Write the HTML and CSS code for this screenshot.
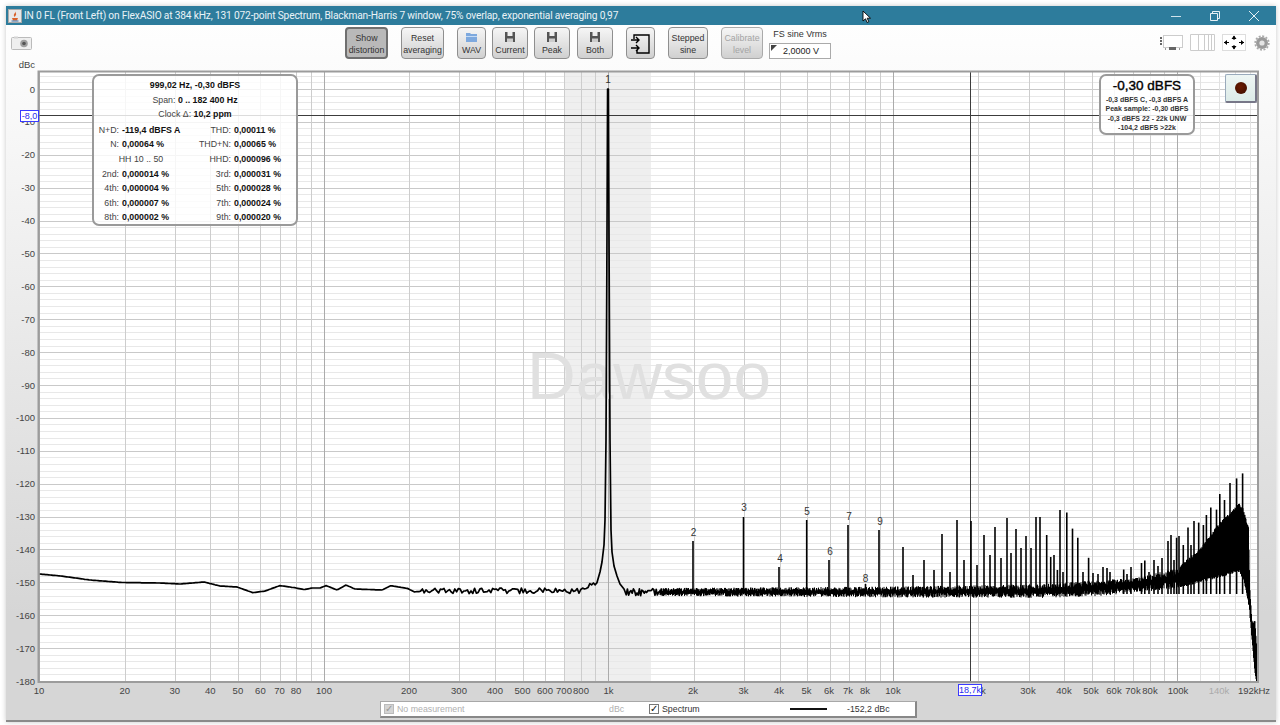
FILE: index.html
```html
<!DOCTYPE html>
<html lang="en">
<head>
  <meta charset="UTF-8">
  <title>REW RTA</title>
  <link rel="stylesheet" href="styles.css">
</head>
<body>
  <div class="window">
    <div class="titlebar">
      <svg class="app-icon" width="14" height="14" viewBox="0 0 14 14">
        <rect x="0.5" y="0.5" width="13" height="13" fill="#e8e8e8" stroke="#aaa"/>
        <path d="M7 2c1 2-2 3-1 5 .4.8 1 1 1 1-.3-1 2-2 .8-4M4 9h6l-1 2.5H5z" fill="#d9622b"/>
        <path d="M3.500 12h7" stroke="#3b6ea8"/>
      </svg>
      <span class="title-text">IN 0 FL (Front Left) on FlexASIO at 384 kHz, 131 072-point Spectrum, Blackman-Harris 7 window, 75% overlap, exponential averaging 0,97</span>
      <div class="win-controls">
        <svg width="12" height="12" viewBox="0 0 12 12"><path d="M1 6.500h10" stroke="#cfe3ec"/></svg>
        <svg width="12" height="12" viewBox="0 0 12 12"><path d="M1.500 3.500h7v7h-7zM3.500 3.500v-2h7v7h-2" fill="none" stroke="#e6f0f5"/></svg>
        <svg width="12" height="12" viewBox="0 0 12 12"><path d="M1 1l10 10M11 1L1 11" stroke="#e6f0f5"/></svg>
      </div>
      <svg class="mouse" width="10" height="14" viewBox="0 0 10 14"><path d="M1 1v10l2.500-2.200 1.600 3.700 1.700-.8-1.600-3.500H8.500z" fill="#fff" stroke="#000" stroke-width=".9"/></svg>
    </div>

    <div class="toolbar">
      <svg class="camera" width="21" height="14" viewBox="0 0 21 14">
        <rect x="0.500" y="1.500" width="20" height="12" rx="1" fill="#efefef" stroke="#bbb"/>
        <rect x="3" y="0.500" width="4" height="2" fill="#d4d4d4"/>
        <circle cx="13" cy="7.500" r="3.800" fill="#a0a0a0"/>
        <circle cx="13" cy="7.500" r="1.800" fill="#555"/>
      </svg>

      <button class="tool pressed w43">Show<br>distortion</button>
      <button class="tool w43 gap-l">Reset<br>averaging</button>
      <button class="tool w29 gap-l">
        <svg width="11" height="10" viewBox="0 0 11 10"><path d="M0 1h4l1 1h6v8H0z" fill="#7ea9de"/><path d="M0 4h11v1H0z" fill="#c6dcf5"/></svg>
        <span>WAV</span>
      </button>
      <button class="tool w36 gap-s">
        <svg width="10" height="10" viewBox="0 0 10 10"><path d="M0 0h10v10H0z" fill="#555"/><path d="M2.500 0h5v4h-5z" fill="#eee"/><path d="M2 6.500h6V10H2z" fill="#ccc"/></svg>
        <span>Current</span>
      </button>
      <button class="tool w36 gap-s">
        <svg width="10" height="10" viewBox="0 0 10 10"><path d="M0 0h10v10H0z" fill="#555"/><path d="M2.500 0h5v4h-5z" fill="#eee"/><path d="M2 6.500h6V10H2z" fill="#ccc"/></svg>
        <span>Peak</span>
      </button>
      <button class="tool w36 gap-m">
        <svg width="10" height="10" viewBox="0 0 10 10"><path d="M0 0h10v10H0z" fill="#555"/><path d="M2.500 0h5v4h-5z" fill="#eee"/><path d="M2 6.500h6V10H2z" fill="#ccc"/></svg>
        <span>Both</span>
      </button>
      <button class="tool w29 gap-l">
        <svg width="19" height="20" viewBox="0 0 19 20"><path d="M3 5V1h15v18H6v-3" fill="none" stroke="#000" stroke-width="1.400"/><path d="M0 6h8M5 3l3 3-3 3M0 14h8M5 11l3 3-3 3" fill="none" stroke="#000" stroke-width="1.400"/></svg>
      </button>
      <button class="tool w40 gap-l">Stepped<br>sine</button>
      <button class="tool w42 gap-l" disabled>Calibrate<br>level</button>
      <div class="fs-box">
        <div class="fs-label">FS sine Vrms</div>
        <div class="fs-input">2,0000 V</div>
      </div>

      <div class="view-icons">
        <svg width="24" height="17" viewBox="0 0 24 17">
          <rect x="4.500" y="1.500" width="19" height="12" fill="#fff" stroke="#ccc"/>
          <path d="M1 3h2v2H1zM1 6h2v2H1zM1 9h2v2H1z" fill="#666"/>
          <path d="M10 13h7v3h-7z" fill="#666"/>
          <path d="M6 15h1M20 15h1" stroke="#333"/>
        </svg>
        <svg width="25" height="17" viewBox="0 0 25 17"><path d="M.5.500h24v16H.500zM8.500.500v16M14.500.500v16M18.500.500v16M21.500.500v16" fill="#fff" stroke="#ccc"/></svg>
        <svg width="24" height="17" viewBox="0 0 24 17">
          <rect x="0.500" y="0.500" width="23" height="16" fill="#fff" stroke="#ddd"/>
          <path d="M2 8.500h5M22 8.500h-5M12 2v4M12 15v-4" stroke="#000"/>
          <path d="M2 8.500L5 6v5zM22 8.500L19 6v5zM12 1.500L9.500 5h5zM12 15.500L9.500 12h5z" fill="#000"/>
        </svg>
        <svg class="gear" width="16" height="16" viewBox="0 0 16 16">
          <circle cx="8" cy="8" r="6" fill="#9a9a9a"/>
          <circle cx="8" cy="8" r="6.800" fill="none" stroke="#aaa" stroke-width="1.800" stroke-dasharray="2 1.560"/>
          <circle cx="8" cy="8" r="2.600" fill="#e4e4e4"/>
        </svg>
      </div>
    </div>

    <div class="chart-panel">
      <svg id="plot" class="plot" width="1270" height="639" viewBox="6 60 1270 639"></svg>

      <div class="cursor-tag y-tag">-8,0</div>
      <div class="cursor-tag x-tag">18,7k</div>

      <div class="info-box">
        <div class="info-head"><b>999,02 Hz, -0,30 dBFS</b></div>
        <div class="info-head">Span: <b>0 .. 182 400 Hz</b></div>
        <div class="info-head">Clock Δ: <b>10,2 ppm</b></div>
        <div class="info-grid">
          <span class="lbl">N+D:</span><b>-119,4 dBFS A</b><span class="lbl">THD:</span><b>0,00011 %</b>
          <span class="lbl">N:</span><b>0,00064 %</b><span class="lbl">THD+N:</span><b>0,00065 %</b>
          <span class="hh">HH 10 .. 50</span><span class="lbl">HHD:</span><b>0,000096 %</b>
          <span class="lbl">2nd:</span><b>0,000014 %</b><span class="lbl">3rd:</span><b>0,000031 %</b>
          <span class="lbl">4th:</span><b>0,000004 %</b><span class="lbl">5th:</span><b>0,000028 %</b>
          <span class="lbl">6th:</span><b>0,000007 %</b><span class="lbl">7th:</span><b>0,000024 %</b>
          <span class="lbl">8th:</span><b>0,000002 %</b><span class="lbl">9th:</span><b>0,000020 %</b>
        </div>
      </div>

      <div class="level-box">
        <div class="level-big">-0,30 dBFS</div>
        <div>-0,3 dBFS C, -0,3 dBFS A</div>
        <div>Peak sample: -0,30 dBFS</div>
        <div>-0,3 dBFS 22 - 22k UNW</div>
        <div>-104,2 dBFS &gt;22k</div>
      </div>

      <button class="rec-btn"><span class="rec-dot"></span></button>
    </div>

    <div class="footer">
      <div class="legend">
        <span class="check off">✓</span>
        <span class="leg-name off-text">No measurement</span>
        <span class="leg-unit off-text">dBc</span>
        <span class="check on">✓</span>
        <span class="leg-spec">Spectrum</span>
        <span class="leg-line"></span>
        <span class="leg-value">-152,2 dBc</span>
      </div>
    </div>
  </div>
  <script src="plot.js"></script>
</body>
</html>
```

FILE: styles.css
```css
* {
  box-sizing: border-box;
}

body {
  margin: 0;
  padding: 6px 4px 3px 6px;
  background: #fff;
  font-family: "Liberation Sans", Arial, sans-serif;
  overflow: hidden;
}

.window {
  width: 1270px;
  height: 716px;
  display: flex;
  flex-direction: column;
  background: linear-gradient(#fff 0%, #fbfbfb 10%, #d6d6d6 85%);
  box-shadow: 0 0 5px rgba(0, 0, 0, 0.22);
  border-bottom: 2px solid #8a8a8a;
}

/* title bar */
.titlebar {
  position: relative;
  height: 19px;
  flex: none;
  display: flex;
  align-items: center;
  padding-left: 2px;
  background: #2d7c9c;
  color: #eaf3f7;
}

.app-icon {
  margin-right: 2px;
}

.title-text {
  font-family: Roboto, sans-serif;
  font-size: 10.2px;
  letter-spacing: -0.17px;
  white-space: nowrap;
}

.win-controls {
  margin-left: auto;
  display: flex;
  gap: 27px;
  margin-right: 16px;
}

.mouse {
  position: absolute;
  left: 856px;
  top: 4px;
}

/* toolbar */
.toolbar {
  height: 35px;
  flex: none;
  display: flex;
  align-items: flex-start;
  padding-top: 2px;
}

.camera {
  margin: 9px 313px 0 5px;
}

.tool {
  height: 32px;
  padding: 2px 0 0;
  border: 1px solid #8f8f8f;
  border-radius: 4px;
  background: linear-gradient(#f6f6f6, #d0d0d0);
  font-family: inherit;
  font-size: 8.8px;
  line-height: 12px;
  color: #333;
  display: flex;
  flex-direction: column;
  align-items: center;
  justify-content: center;
  text-align: center;
}

.tool span {
  margin-top: 2px;
}

.tool.pressed {
  background: #b9b9b9;
  border: 2px solid #6f6f6f;
}

.tool:disabled {
  color: #a4a4a4;
  border-color: #aaa;
}

.w29 { width: 29px; }
.w36 { width: 36px; }
.w40 { width: 40px; }
.w42 { width: 42px; }
.w43 { width: 43px; }

.gap-l { margin-left: 13px; }
.gap-m { margin-left: 7px; }
.gap-s { margin-left: 6px; }

.fs-box {
  width: 62px;
  margin-left: 6px;
  font-size: 9px;
  color: #333;
}

.fs-label {
  text-align: center;
  height: 16px;
  line-height: 14px;
  white-space: nowrap;
}

.fs-input {
  position: relative;
  height: 16px;
  background: #fff;
  border: 1px solid #aaa;
  line-height: 15px;
  padding-left: 13px;
  color: #222;
}

.fs-input::before {
  content: "";
  position: absolute;
  left: 1px;
  top: 1px;
  border-top: 6px solid #444;
  border-right: 6px solid transparent;
}

.view-icons {
  margin-left: 328px;
  margin-top: 7px;
  display: flex;
  align-items: center;
  gap: 7px;
}

.gear {
  margin-left: 1px;
}

/* chart */
.chart-panel {
  position: relative;
  flex: none;
  height: 639px;
}

.plot {
  display: block;
  font-family: "Liberation Sans", Arial, sans-serif;
}

.cursor-tag {
  position: absolute;
  height: 12px;
  background: #fff;
  border: 1px solid #3a3aff;
  color: #2a2aee;
  font-size: 9px;
  line-height: 10px;
  text-align: center;
  white-space: nowrap;
}

.y-tag {
  left: 14px;
  top: 50px;
  width: 19px;
}

.x-tag {
  left: 952px;
  top: 624px;
  width: 24px;
}

.info-box {
  position: absolute;
  left: 86px;
  top: 14px;
  width: 206px;
  height: 152px;
  padding-top: 2px;
  background: rgba(255, 255, 255, 0.82);
  border: 2px solid #9a9a9a;
  border-radius: 7px;
  font-size: 8.8px;
  line-height: 14.6px;
  color: #444;
}

.info-box b {
  color: #111;
}

.info-head {
  text-align: center;
}

.info-grid {
  margin-top: 1px;
  display: grid;
  grid-template-columns: 28px 66px 46px auto;
}

.lbl {
  text-align: right;
  padding-right: 3px;
  white-space: nowrap;
}

.info-grid b {
  white-space: nowrap;
}

.hh {
  grid-column: span 2;
  text-align: center;
}

.level-box {
  position: absolute;
  left: 1093px;
  top: 14px;
  width: 96px;
  height: 61px;
  background: rgba(255, 255, 255, 0.85);
  border: 2px solid #9a9a9a;
  border-radius: 7px;
  text-align: center;
  font-size: 7px;
  font-weight: bold;
  line-height: 9.300px;
  color: #333;
  white-space: nowrap;
}

.level-big {
  font-size: 13.500px;
  font-weight: normal;
  -webkit-text-stroke: 0.4px #000;
  color: #000;
  line-height: 19px;
}

.rec-btn {
  position: absolute;
  left: 1219px;
  top: 14px;
  width: 32px;
  height: 29px;
  padding: 0;
  display: flex;
  align-items: center;
  justify-content: center;
  background: linear-gradient(#eef6f4, #dcebe8);
  border: 1px solid #9ab;
  border-right: 2px solid #778;
  border-bottom: 2px solid #778;
  border-radius: 2px;
}

.rec-dot {
  width: 12px;
  height: 12px;
  border-radius: 50%;
  background: radial-gradient(circle at 45% 40%, #6b1a00, #3a0c00);
}

/* legend */
.footer {
  flex: 1;
  padding: 2px 0 0 374px;
}

.legend {
  width: 537px;
  height: 17px;
  display: flex;
  align-items: center;
  background: #fff;
  border: 1px solid #a8a8a8;
  border-right: 2px solid #888;
  border-bottom: 2px solid #888;
  font-size: 8.8px;
  color: #333;
}

.check {
  width: 10px;
  height: 10px;
  border: 1px solid #777;
  font-size: 10px;
  line-height: 8px;
  text-align: center;
  color: #111;
}

.check.off {
  margin-left: 3px;
  background: #d4d4d4;
  border-color: #bbb;
  color: #999;
}

.check.on {
  margin-left: 14px;
}

.off-text {
  color: #b0b0b0;
}

.leg-name {
  margin-left: 3px;
  width: 212px;
}

.leg-unit {
  width: 26px;
}

.leg-spec {
  margin-left: 3px;
  width: 128px;
}

.leg-line {
  width: 37px;
  height: 2px;
  background: #111;
}

.leg-value {
  margin-left: 20px;
}
```

FILE: plot.js
```js
// RTA plot, coordinates are page pixels (see viewBox)
const NS = "http://www.w3.org/2000/svg";
const plot = document.getElementById("plot");

const LEFT = 39, RIGHT = 1258, TOP = 72, BOTTOM = 682;
const fx = (hz) => 39 + 284.6 * Math.log10(hz / 10);
const fy = (db) => 89 - db * 3.289;

function add(tag, attrs, text) {
  const el = document.createElementNS(NS, tag);
  for (const k in attrs) el.setAttribute(k, attrs[k]);
  if (text !== undefined) el.textContent = text;
  plot.appendChild(el);
  return el;
}

function line(x1, y1, x2, y2, color, w) {
  add("line", { x1, y1, x2, y2, stroke: color, "stroke-width": w || 1 });
}

// small seeded random so the trace stays the same every run
let seed = 7261;
function rnd() {
  seed = (seed + 0x6d2b79f5) | 0;
  let t = Math.imul(seed ^ (seed >>> 15), 1 | seed);
  t = (t + Math.imul(t ^ (t >>> 7), 61 | t)) ^ t;
  return ((t ^ (t >>> 14)) >>> 0) / 4294967296;
}

function interp(table, x) {
  if (x <= table[0][0]) return table[0][1];
  for (let i = 1; i < table.length; i++) {
    if (x <= table[i][0]) {
      const a = table[i - 1], b = table[i];
      return a[1] + ((b[1] - a[1]) * (x - a[0])) / (b[0] - a[0]);
    }
  }
  return table[table.length - 1][1];
}

// plot background
add("rect", { x: LEFT, y: TOP, width: RIGHT - LEFT, height: BOTTOM - TOP, fill: "#fff" });
add("rect", { x: 564, y: TOP, width: 87, height: BOTTOM - TOP, fill: "#efefef" });

// horizontal grid
for (let db = 4; db >= -180; db -= 2) {
  const y = Math.round(fy(db)) + 0.5;
  line(LEFT, y, RIGHT, y, db % 10 === 0 ? "#c9c9c9" : "#e8e8e8", db % 10 === 0 ? 1 : 1.2);
}

// vertical grid
for (let dec = 10; dec <= 100000; dec *= 10) {
  for (let m = 1; m <= 9; m++) {
    if (dec * m > 192000) continue;
    const x = Math.round(fx(dec * m)) + 0.5;
    line(x, TOP, x, BOTTOM, m === 1 ? "#ababab" : "#cdcdcd");
  }
}
[120000, 140000, 160000, 180000].forEach((hz) => {
  const x = Math.round(fx(hz)) + 0.5;
  line(x, TOP, x, BOTTOM, "#e2e2e2");
});

// watermark
add("text", { x: 649, y: 399, "font-size": 67.5, fill: "#e0e0e0", "text-anchor": "middle" }, "Dawsoo");

// cursors
line(LEFT, 115.5, RIGHT, 115.5, "#3c3c3c");
line(970.5, TOP, 970.5, BOTTOM, "#3c3c3c");

// trace: smooth low end
const low = [[39.6, 574], [61, 576], [90, 580], [122, 582.5], [159, 583], [180, 584], [204, 582], [220, 586],
  [237, 587], [253, 592.7], [265, 591], [280, 585.6], [294, 587.6], [304, 589.6], [312, 588], [320, 588],
  [326, 585.6], [337, 590], [346, 585], [355, 589], [382, 590], [391, 585.6], [408, 588.6], [416, 592.7]];
let pts = [];
for (let x = 39.6; x <= 416; x += 1.5) pts.push(x + "," + interp(low, x).toFixed(1));

// noisy part up to the peak
for (let x = 417; x < 597; x += 1.8) {
  const amp = x < 560 ? 3 : 4;
  const rise = x > 575 ? (x - 575) * 0.25 : 0;
  pts.push(x + "," + (591 - rise + (rnd() - 0.5) * amp * 2).toFixed(1));
}
// peak skirt
[[598, 579], [600, 572], [602, 562], [604, 545], [605, 520], [606, 440], [606.8, 280], [607.6, 89],
  [608.4, 89], [609.2, 280], [610, 440], [611, 530], [612, 552], [614, 566], [617, 576], [620, 584],
  [624, 589]].forEach((p) => pts.push(p[0] + "," + p[1]));
for (let x = 625; x < 670; x += 1.2) {
  pts.push(x + "," + (592 + (rnd() - 0.5) * 7.5).toFixed(1));
}
add("polyline", { points: pts.join(" "), fill: "none", stroke: "#000", "stroke-width": 1.7, "stroke-linejoin": "round" });

// noise band, drawn as vertical strokes
const loEnv = [[660, 596], [900, 597.5], [1040, 598], [1100, 596], [1177, 588.5], [1200, 583], [1239, 572],
  [1244, 582], [1249, 607], [1254, 664], [1256, 682], [1258, 682]];
const hiEnv = [[660, 588], [900, 586.5], [1040, 584], [1100, 580], [1140, 577], [1177, 568], [1200, 548],
  [1220, 522], [1239, 503], [1243, 508], [1248.5, 527], [1250, 590], [1252, 620], [1255, 621], [1257, 650], [1258, 682]];
let band = "";
for (let x = 660; x < 1257.5; x += 0.5) {
  const lo = interp(loEnv, x), hi = interp(hiEnv, x);
  const h = lo - hi;
  const k = x < 1180 ? 0.38 : 0.1;
  const top = hi + rnd() * Math.min(h, 30) * k;
  const bot = lo - rnd() * Math.min(h, 30) * k;
  band += "M" + x + " " + top.toFixed(1) + "V" + bot.toFixed(1);
}
add("path", { d: band, fill: "none", stroke: "#000", "stroke-width": 1 });

// harmonics and other spurs [x, top]
const spurs = [[693, 541], [743.5, 517], [779, 567], [806.7, 520], [829, 560], [848, 525], [865.5, 584], [879, 530],
  [903, 547], [924, 560], [913, 575], [934, 570], [942, 534], [950, 572], [957, 520], [964, 560], [971, 521], [977, 565],
  [984, 535], [990, 555], [995, 527], [1001, 558], [1007, 518], [1011, 553], [1016, 529], [1021, 548], [1026, 536],
  [1031, 548], [1036, 517], [1040, 517], [1046.7, 535], [1050.7, 557], [1054, 555], [1057.4, 570], [1060, 510],
  [1063, 572], [1066.8, 512.6], [1072.5, 528.6], [1077.8, 537.7], [1083, 572], [1088.6, 557.8], [1093, 573],
  [1098, 574], [1103, 567], [1107, 568], [1110, 572], [1123.7, 569.5], [1127, 574], [1131, 567], [1141.5, 563],
  [1144.8, 560.5], [1149, 572], [1154, 560], [1158, 566], [1162, 558], [1168, 541], [1171, 535], [1174, 560],
  [1176.6, 537.7], [1179, 536], [1183.3, 545], [1188, 527.6], [1191, 545], [1194, 521], [1198.7, 522.6],
  [1203.4, 525], [1206.4, 515], [1210.8, 507.5], [1216.5, 509.6], [1219.8, 494], [1224.5, 500], [1230, 483],
  [1236.6, 478.4], [1242.6, 473.4]];
spurs.forEach((s) => line(s[0], s[1], s[0], 594, "#000", 1.6));
line(1257.7, 572, 1257.7, 682, "#555", 1.2);

// harmonic numbers
[["1", 608, 83], ["2", 693.5, 535.5], ["3", 744, 511], ["4", 780, 562], ["5", 807, 515], ["6", 830, 555],
  ["7", 849, 520], ["8", 865.5, 582], ["9", 880, 525]].forEach((h) => {
  add("text", { x: h[1], y: h[2], "font-size": 10, fill: "#333", "text-anchor": "middle" }, h[0]);
});

// frame
add("path", { d: `M${LEFT - 0.5} ${BOTTOM}V${TOP - 0.5}H${RIGHT}V${BOTTOM}Z`, fill: "none", stroke: "#9c9c9c", "stroke-width": 2 });

// y labels
add("text", { x: 35, y: 68, "font-size": 9.5, fill: "#444", "text-anchor": "end" }, "dBc");
for (let db = 0; db >= -180; db -= 10) {
  add("text", { x: 35, y: fy(db) + 3.5, "font-size": 9.5, fill: "#444", "text-anchor": "end" }, String(db));
}

// x labels
[[39, "10"], [124.7, "20"], [174.8, "30"], [210.3, "40"], [237.9, "50"], [260.4, "60"], [279.5, "70"], [296, "80"], [324, "100"],
  [409, "200"], [459, "300"], [495, "400"], [522.5, "500"], [545, "600"], [564, "700"], [581, "800"], [608.5, "1k"],
  [693, "2k"], [743.5, "3k"], [779, "4k"], [806.5, "5k"], [829, "6k"], [848, "7k"], [865, "8k"], [893, "10k"],
  [978, "20k"], [1028, "30k"], [1064, "40k"], [1091, "50k"], [1114, "60k"], [1133, "70k"], [1150, "80k"],
  [1178, "100k"], [1219, "140k"], [1254, "192kHz"]].forEach((l) => {
  add("text", {
    x: l[0], y: 694, "font-size": 9.5, "text-anchor": "middle",
    fill: l[1] === "140k" ? "#aaa" : "#444",
  }, l[1]);
});
```
